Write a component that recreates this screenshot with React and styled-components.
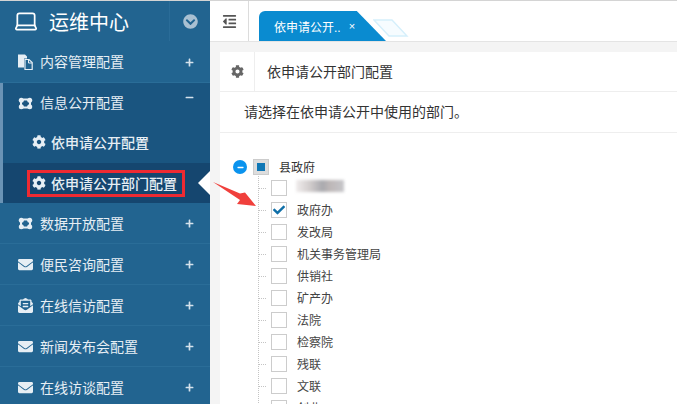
import React from 'react';
import styled, { createGlobalStyle } from 'styled-components';
import { FaCog, FaEnvelope, FaEnvelopeOpenText, FaChevronCircleDown, FaOutdent, FaPlus, FaMinus, FaCheck } from 'react-icons/fa';
import { Laptop } from 'lucide-react';

const GlobalStyle = createGlobalStyle`
    html, body {
        margin: 0;
        padding: 0;
        height: 100%;
        overflow: hidden;
        background: #f4f4f4;
        font-family: "Liberation Sans", "Noto Sans CJK SC", sans-serif;
    }
`

const Page = styled.div`
    position: relative;
    display: flex;
    width: 677px;
    height: 404px;
    overflow: hidden;
    box-sizing: border-box;
    border-top: 1px solid #d4d4d4;
`

const Sidebar = styled.div`
    width: 210px;
    flex-shrink: 0;
    background: #226490;
    color: #fff;
`

const Brand = styled.div`
    display: flex;
    align-items: center;
    height: 40px;
`

const BrandTitle = styled.div`
    display: flex;
    align-items: center;
    gap: 10px;
    width: 170px;
    height: 100%;
    box-sizing: border-box;
    padding-left: 13px;
    border-right: 1px solid #2a6c98;
    font-size: 20px;
`

const BrandToggle = styled.div`
    flex: 1;
    display: flex;
    justify-content: center;
    padding-left: 1px;
    color: #a9c0d2;
    font-size: 15px;
    line-height: 0;
`

const MenuRow = styled.div`
    display: flex;
    align-items: center;
    height: ${p => p.$height || 41}px;
    box-sizing: border-box;
    padding-left: 18px;
    padding-right: 16px;
    font-size: 14px;
    color: #e6eef4;
    border-bottom: 1px solid ${p => p.$open ? 'transparent' : '#2a6d98'};
`

const MenuIcon = styled.span`
    display: flex;
    justify-content: center;
    width: 15px;
    margin-right: 7px;
    font-size: 15px;
`

const MenuLabel = styled.span`
    flex: 1;
    margin-top: ${p => p.$lift ? -2 : 0}px;
`

const Sign = styled.span`
    display: flex;
    color: #d5e2ec;
    font-size: 9px;
    margin-top: ${p => p.$up ? -12 : 1}px;
`

const OpenGroup = styled.div`
    background: #1a5580;
    border-left: 3px solid #6a93b5;
    ${MenuRow} {
        padding-left: 15px;
    }
`

const SubRow = styled.div`
    display: flex;
    align-items: center;
    height: ${p => p.$active ? 40 : 39}px;
    padding-left: 29px;
    font-size: 14px;
    font-weight: 500;
    color: #e6eef4;
    background: ${p => p.$active ? '#15466f' : 'transparent'};
`

const SubLabel = styled.span`
    display: flex;
    align-items: center;
    gap: 5px;
    font-size: 14px;
    margin-top: ${p => p.$boxed ? 0 : -3}px;
    ${p => p.$boxed && `
        margin-left: -5px;
        padding: 0 2px 0 2px;
        width: 158px;
        height: 27px;
        border: 3px solid #ee2a32;
        box-sizing: border-box;
    `}
`

const Notch = styled.div`
    position: absolute;
    left: 198px;
    top: 170px;
    width: 0;
    height: 0;
    border-style: solid;
    border-width: 12px 12px 12px 0;
    border-color: transparent #fff transparent transparent;
`

const Arrow = styled.svg`
    position: absolute;
    left: 212px;
    top: 180px;
`

const Main = styled.div`
    flex: 1;
    display: flex;
    flex-direction: column;
    min-width: 0;
`

const TopBar = styled.div`
    display: flex;
    height: 40px;
    flex-shrink: 0;
    background: #fff;
    border-bottom: 1px solid #e4e4e4;
`

const Toggle = styled.div`
    display: flex;
    align-items: center;
    justify-content: center;
    width: 38px;
    border-right: 1px solid #dcdcdc;
    color: #555;
    font-size: 15px;
`

const Tabs = styled.div`
    display: flex;
    align-items: flex-end;
    padding-left: 10px;
`

const Tab = styled.div`
    position: relative;
    z-index: 1;
    display: flex;
    align-items: center;
    width: 127px;
    height: 30px;
    box-sizing: border-box;
    padding-left: 15px;
    color: #fff;
    font-size: 12px;
    background: #0a8bd0;
    border-radius: 6px 0 0 0;
    clip-path: polygon(0 0, 77% 0, 100% 100%, 0 100%);
`

const TabClose = styled.span`
    margin-left: 8px;
    font-size: 11px;
`

const GhostTab = styled.svg`
    margin-left: -13px;
    margin-bottom: 4px;
`

const Panel = styled.div`
    margin: 10px 0 0 10px;
    background: #fff;
    flex: 1;
`

const PanelHead = styled.div`
    display: flex;
    align-items: center;
    height: 39px;
    border-bottom: 1px solid #eee;
`

const HeadIcon = styled.div`
    display: flex;
    align-items: center;
    justify-content: center;
    width: 34px;
    height: 100%;
    border-right: 1px solid #eee;
    color: #666;
    font-size: 13px;
`

const HeadTitle = styled.div`
    margin-left: 12px;
    margin-top: -2px;
    font-size: 14px;
    color: #333;
`

const Hint = styled.div`
    display: flex;
    align-items: center;
    height: 41px;
    box-sizing: border-box;
    padding: 0 0 3px 24px;
    font-size: 14px;
    color: #333;
    border-bottom: 1px solid #eee;
`

const Tree = styled.div`
    padding: 25px 0 0 13px;
`

const RootRow = styled.div`
    display: flex;
    align-items: center;
    height: 18px;
`

const Collapse = styled.span`
    display: flex;
    align-items: center;
    justify-content: center;
    width: 14px;
    height: 14px;
    border-radius: 50%;
    background: #0a93ee;
    color: #fff;
    font-size: 7px;
`

const RootBox = styled.span`
    display: flex;
    align-items: center;
    justify-content: center;
    width: 16px;
    height: 16px;
    margin-left: 6px;
    background: #ddd;
    border: 1px solid #ccc;
    box-sizing: border-box;
    &::after {
        content: "";
        width: 8px;
        height: 8px;
        background: #0f77b5;
    }
`

const RootLabel = styled.span`
    margin-left: 10px;
    margin-top: -2px;
    font-size: 12px;
    color: #333;
`

const Children = styled.div`
    margin-left: 25px;
    border-left: 1px dotted #c4c4c4;
    padding-top: 1px;
`

const ChildRow = styled.div`
    display: flex;
    align-items: center;
    height: 22px;
    &::before {
        content: "";
        width: 7px;
        margin-right: 5px;
        border-top: 1px dotted #c4c4c4;
    }
`

const CheckBox = styled.span`
    display: flex;
    align-items: center;
    justify-content: center;
    width: 16px;
    height: 16px;
    box-sizing: border-box;
    border: 1px solid #ccc;
    background: #fff;
    color: #0f6fa8;
    font-size: 12px;
`

const ChildLabel = styled.span`
    margin-left: 10px;
    margin-top: -1px;
    font-size: 12px;
    color: #444;
`

const Smudge = styled.span`
    display: block;
    width: 48px;
    height: 12px;
    margin: -4px 0 0 9px;
    background: linear-gradient(90deg, #f0ecec 0%, #d0cbcb 30%, #a9a9ae 55%, #bdb7b7 70%, #c6c6ca 100%);
    filter: blur(1.5px);
`

const ToggleGlyph = styled(FaOutdent)``

// rounded four lobe icon used by the two publishing menus
const Lobes = () => (
    <svg width="15" height="13" viewBox="0 0 15 13" fill="currentColor">
        <circle cx="3.3" cy="3.3" r="2.5" />
        <circle cx="11.7" cy="3.3" r="2.5" />
        <circle cx="3.3" cy="9.7" r="2.5" />
        <circle cx="11.7" cy="9.7" r="2.5" />
        <rect x="3" y="2.4" width="9" height="8.2" rx="3" fill="none" stroke="currentColor" strokeWidth="2" />
    </svg>
);

// solid back page with an outlined front page
const Pages = () => (
    <svg width="15" height="16" viewBox="0 0 15 16">
        <path d="M0 0.5h7l2 2v2H6v9H0z" fill="currentColor" />
        <path d="M7 5.5h4l3.2 3v7H7z" fill="none" stroke="currentColor" strokeWidth="1.2" />
        <path d="M10.5 5.5v3.5h3.5" fill="none" stroke="currentColor" strokeWidth="1" />
    </svg>
);

const menusBottom = [
    { label: '数据开放配置', icon: <Lobes /> },
    { label: '便民咨询配置', icon: <FaEnvelope /> },
    { label: '在线信访配置', icon: <FaEnvelopeOpenText /> },
    { label: '新闻发布会配置', icon: <FaEnvelope /> },
    { label: '在线访谈配置', icon: <FaEnvelope /> },
];
const departments = ['政府办', '发改局', '机关事务管理局', '供销社', '矿产办', '法院', '检察院', '残联', '文联', '创业'];

const Row = ({ item, height, lift }) => (
    <MenuRow $height={height}>
        <MenuIcon>{item.icon}</MenuIcon>
        <MenuLabel $lift={lift}>{item.label}</MenuLabel>
        <Sign><FaPlus /></Sign>
    </MenuRow>
);

export default function App() {
    return (
        <Page>
            <GlobalStyle />
            <Sidebar>
                <Brand>
                    <BrandTitle>
                        <Laptop size={26} strokeWidth={1.6} />
                        运维中心
                    </BrandTitle>
                    <BrandToggle><FaChevronCircleDown /></BrandToggle>
                </Brand>
                <Row item={{ label: '内容管理配置', icon: <Pages /> }} height={42} lift />
                <OpenGroup>
                    <MenuRow $open>
                        <MenuIcon><Lobes /></MenuIcon>
                        <MenuLabel $lift>信息公开配置</MenuLabel>
                        <Sign $up><FaMinus /></Sign>
                    </MenuRow>
                    <SubRow>
                        <SubLabel><FaCog />依申请公开配置</SubLabel>
                    </SubRow>
                    <SubRow $active>
                        <SubLabel $boxed><FaCog />依申请公开部门配置</SubLabel>
                    </SubRow>
                </OpenGroup>
                {menusBottom.map(m => <Row key={m.label} item={m} />)}
            </Sidebar>
            <Main>
                <TopBar>
                    <Toggle><ToggleGlyph /></Toggle>
                    <Tabs>
                        <Tab>依申请公开..<TabClose>×</TabClose></Tab>
                        <GhostTab width="36" height="18" viewBox="0 0 36 18">
                            <path d="M1 1h18l15 16H16z" fill="#f6fcff" stroke="#d5effb" strokeWidth="1.4" />
                        </GhostTab>
                    </Tabs>
                </TopBar>
                <Panel>
                    <PanelHead>
                        <HeadIcon><FaCog /></HeadIcon>
                        <HeadTitle>依申请公开部门配置</HeadTitle>
                    </PanelHead>
                    <Hint>请选择在依申请公开中使用的部门。</Hint>
                    <Tree>
                        <RootRow>
                            <Collapse><FaMinus /></Collapse>
                            <RootBox />
                            <RootLabel>县政府</RootLabel>
                        </RootRow>
                        <Children>
                            <ChildRow>
                                <CheckBox />
                                <Smudge />
                            </ChildRow>
                            {departments.map((d, i) => (
                                <ChildRow key={d}>
                                    <CheckBox>{i === 0 && <FaCheck />}</CheckBox>
                                    <ChildLabel>{d}</ChildLabel>
                                </ChildRow>
                            ))}
                        </Children>
                    </Tree>
                </Panel>
            </Main>
            <Notch />
            <Arrow width="46" height="27" viewBox="0 0 46 27">
                <path d="M1 1l27 11.5 5-1L44 25l-19-2 3-4z" fill="#f0403c" />
            </Arrow>
        </Page>
    );
}
